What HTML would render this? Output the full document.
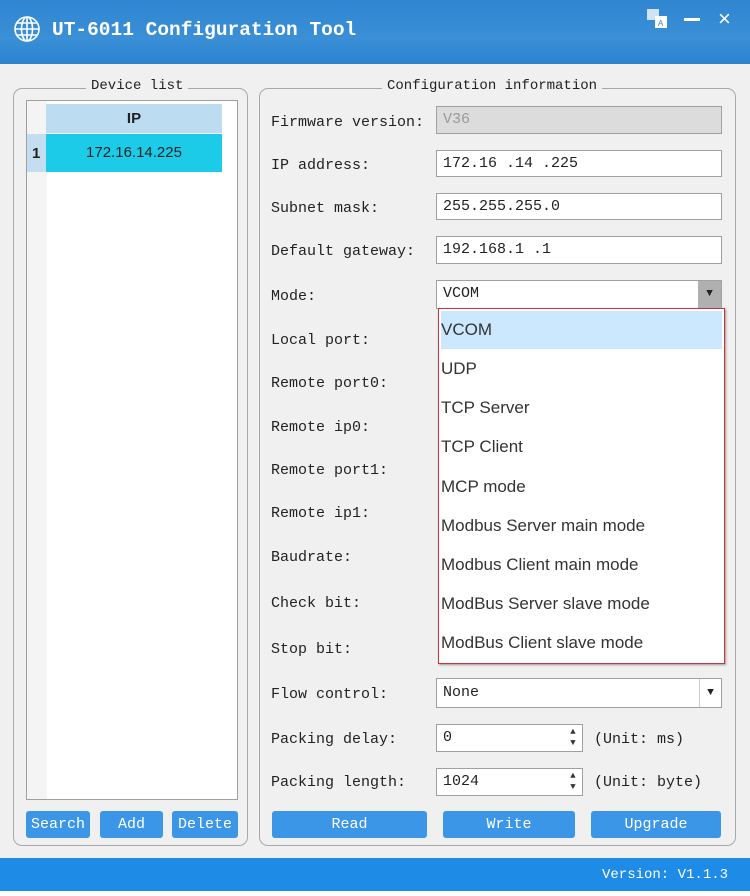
<!DOCTYPE html>
<html><head><meta charset="utf-8"><style>
*{margin:0;padding:0;box-sizing:border-box}
body{width:750px;height:896px;background:#f0f0f0;position:relative;overflow:hidden;font-family:"Liberation Mono",monospace;color:#222}
.a{position:absolute}
.title{left:0;top:0;width:750px;height:64px;background:linear-gradient(180deg,#2f86d0,#3a8fd6 60%,#2c84cf)}
.ttext{left:52px;top:19px;color:#fff;font-size:19.5px;font-weight:bold}
.grp{border:1px solid #a8a8a8;border-radius:9px}
.glab{background:#f0f0f0;font-size:14px;padding:0 5px;color:#222}
.lbl{font-size:15px;left:271px}
.inp{background:#fff;border:1px solid #a0a0a0;font-size:15px;padding-left:6px;line-height:25px}
.btn{background:#3b96e8;color:#fff;font-size:15px;text-align:center;line-height:27px;border-radius:3px;top:811px;height:27px}
.dd{left:438px;top:308px;width:287px;height:356px;border:1.5px solid #d0323a;background:#fff;box-shadow:1px 1px 2px #999}
.it{position:absolute;left:2px;width:281px;height:38px;font-family:"Liberation Sans",sans-serif;font-size:17px;color:#333;line-height:38px}
.spin{position:absolute;right:3px;width:12px;font-size:9px;color:#333;line-height:9px;text-align:center}
</style></head><body>
<div class="a title"></div>
<svg class="a" style="left:12px;top:14px" width="32" height="32" viewBox="0 0 32 32"><g fill="none" stroke="#fff" stroke-width="1.6"><circle cx="15" cy="15" r="12"/><ellipse cx="15" cy="15" rx="5.5" ry="12"/><line x1="3" y1="15" x2="27" y2="15"/><line x1="15" y1="3" x2="15" y2="27"/><path d="M5 9h20M5 21h20"/></g></svg>
<div class="a ttext">UT-6011 Configuration Tool</div>
<svg class="a" style="left:646px;top:8px" width="24" height="22"><rect x="1" y="1" width="12" height="11" fill="#cfe3f5"/><rect x="9" y="8" width="12" height="12" fill="#fff"/><text x="12" y="18" font-size="8" fill="#2c84cf" font-family="Liberation Sans">A</text></svg>
<div class="a" style="left:684px;top:18px;width:16px;height:3px;background:#fff"></div>
<div class="a" style="left:718px;top:6px;color:#fff;font-family:'Liberation Sans',sans-serif;font-size:22px">×</div>

<div class="a grp" style="left:13px;top:88px;width:235px;height:758px"></div>
<div class="a glab" style="left:86px;top:78px">Device list</div>
<div class="a" style="left:26px;top:100px;width:212px;height:700px;background:#fff;border:1px solid #a0a0a0"></div>
<div class="a" style="left:27px;top:101px;width:20px;height:698px;background:#f4f4f4"></div>
<div class="a" style="left:46px;top:104px;width:176px;height:29px;background:#bcdcf2;text-align:center;font:bold 15px 'Liberation Sans',sans-serif;line-height:29px">IP</div>
<div class="a" style="left:27px;top:134px;width:19px;height:38px;background:#c4ddf0;font:bold 15px 'Liberation Sans',sans-serif;line-height:40px;padding-left:5px">1</div>
<div class="a" style="left:46px;top:134px;width:176px;height:38px;background:#1ccbe8;text-align:center;font:15px 'Liberation Sans',sans-serif;line-height:38px;color:#222">172.16.14.225</div>
<div class="a btn" style="left:26px;width:64px">Search</div>
<div class="a btn" style="left:100px;width:63px">Add</div>
<div class="a btn" style="left:172px;width:66px">Delete</div>

<div class="a grp" style="left:259px;top:88px;width:477px;height:758px"></div>
<div class="a glab" style="left:382px;top:78px">Configuration information</div>

<div class="a lbl" style="top:114px">Firmware version:</div>
<div class="a lbl" style="top:157px">IP address:</div>
<div class="a lbl" style="top:200px">Subnet mask:</div>
<div class="a lbl" style="top:243px">Default gateway:</div>
<div class="a lbl" style="top:288px">Mode:</div>
<div class="a lbl" style="top:332px">Local port:</div>
<div class="a lbl" style="top:375px">Remote port0:</div>
<div class="a lbl" style="top:419px">Remote ip0:</div>
<div class="a lbl" style="top:462px">Remote port1:</div>
<div class="a lbl" style="top:505px">Remote ip1:</div>
<div class="a lbl" style="top:549px">Baudrate:</div>
<div class="a lbl" style="top:595px">Check bit:</div>
<div class="a lbl" style="top:641px">Stop bit:</div>
<div class="a lbl" style="top:686px">Flow control:</div>
<div class="a lbl" style="top:731px">Packing delay:</div>
<div class="a lbl" style="top:774px">Packing length:</div>

<div class="a inp" style="left:436px;top:106px;width:286px;height:28px;background:#dcdcdc;color:#999">V36</div>
<div class="a inp" style="left:436px;top:150px;width:286px;height:27px">172.16 .14 .225</div>
<div class="a inp" style="left:436px;top:193px;width:286px;height:27px">255.255.255.0</div>
<div class="a inp" style="left:436px;top:236px;width:286px;height:28px">192.168.1  .1</div>
<div class="a inp" style="left:436px;top:280px;width:286px;height:29px">VCOM<div class="a" style="right:0;top:0;width:23px;height:27px;background:#b0b0b0;font-size:11px;text-align:center;line-height:27px;padding:0">▼</div></div>
<div class="a dd">
<div class="it" style="top:2px;background:#cce8ff">VCOM</div>
<div class="it" style="top:41px">UDP</div>
<div class="it" style="top:80px">TCP Server</div>
<div class="it" style="top:119px">TCP Client</div>
<div class="it" style="top:159px">MCP mode</div>
<div class="it" style="top:198px">Modbus Server main mode</div>
<div class="it" style="top:237px">Modbus Client main mode</div>
<div class="it" style="top:276px">ModBus Server slave mode</div>
<div class="it" style="top:315px">ModBus Client slave mode</div>
</div>
<div class="a inp" style="left:436px;top:678px;width:286px;height:30px;line-height:28px">None<div class="a" style="right:0;top:0;width:22px;height:28px;border-left:1px solid #ccc;font-size:11px;text-align:center;line-height:28px;padding:0">▼</div></div>
<div class="a inp" style="left:436px;top:724px;width:147px;height:28px">0<div class="spin" style="top:3px">▲</div><div class="spin" style="top:14px">▼</div></div>
<div class="a" style="left:594px;top:731px;font-size:15px">(Unit: ms)</div>
<div class="a inp" style="left:436px;top:768px;width:147px;height:28px">1024<div class="spin" style="top:3px">▲</div><div class="spin" style="top:14px">▼</div></div>
<div class="a" style="left:594px;top:774px;font-size:15px">(Unit: byte)</div>
<div class="a btn" style="left:272px;width:155px">Read</div>
<div class="a btn" style="left:443px;width:132px">Write</div>
<div class="a btn" style="left:591px;width:130px">Upgrade</div>

<div class="a" style="left:0;top:858px;width:750px;height:33px;background:#1e8be6"></div>
<div class="a" style="left:602px;top:867px;color:#fff;font-size:14px">Version: V1.1.3</div>
<div class="a" style="left:0;top:891px;width:750px;height:5px;background:#fff"></div>
</body></html>
